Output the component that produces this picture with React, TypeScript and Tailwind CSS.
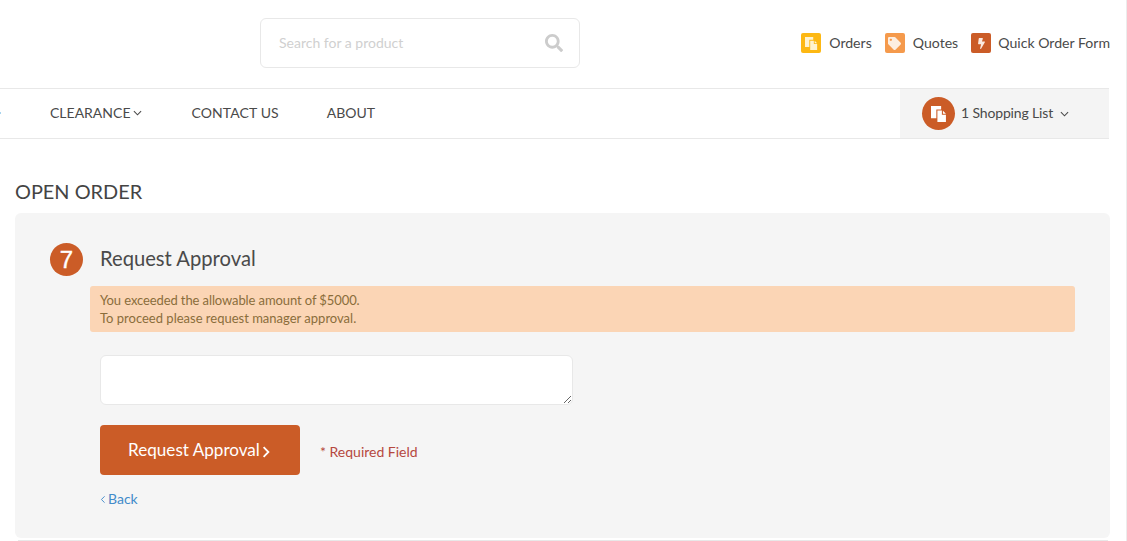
import { FaBolt, FaSearch, FaTag } from "react-icons/fa"

function FilesIcon({ className }: { className?: string }) {
  return (
    <svg viewBox="0 0 15 15" className={className} fill="currentColor">
      <path d="M0 0h9.5v3.2H5V11.5H0z" />
      <path d="M6 4.2h4.2v4H14V15H6zM11.2 4.4 14 7.2H11.2z" />
    </svg>
  )
}

function Chevron({ className, width = "1.2" }: { className?: string; width?: string }) {
  return (
    <svg viewBox="0 0 10 6" className={className} fill="none" stroke="currentColor" strokeWidth={width}>
      <path d="M1 1l4 4 4-4" />
    </svg>
  )
}

const links = [
  { label: "Orders", bg: "bg-[#fdb813]", gap: "gap-[8px]", icon: <FilesIcon className="w-[13px] h-[13px] text-[#fff3d0]" /> },
  { label: "Quotes", bg: "bg-[#f59a4c]", gap: "gap-[8px]", icon: <FaTag className="w-[13px] h-[13px] text-[#fdeee0]" /> },
  { label: "Quick Order Form", bg: "bg-[#cb5c27]", gap: "gap-[7px]", icon: <FaBolt className="w-[9px] h-[11px] text-[#fbeadf]" /> },
]

export default function App() {
  return (
    <div className="w-[1127px] h-[541px] overflow-hidden bg-white border-r border-[#ececec] font-['Lato',sans-serif] text-[#4a4a4a]">
      <div className="w-[1110px]">
        {/* Header */}
        <header className="h-[88px] flex items-center pl-[260px]">
          <div className="w-[320px] h-[50px] mt-[-2px] rounded-[6px] border border-[#e8e8e8] flex items-center justify-between pl-[18px] pr-[16px]">
            <span className="text-[14px] text-[#d0d0d0] mb-[2px]">Search for a product</span>
            <FaSearch className="w-[18px] h-[18px] text-[#cccccc]" />
          </div>
          <nav className="ml-auto flex items-center gap-[13px] mt-[-2px]">
            {links.map((link) => (
              <a key={link.label} className={`flex items-center text-[14.1px] leading-[20px] ${link.gap}`}>
                <span className={`w-[20px] h-[20px] rounded-[2px] flex items-center justify-center ${link.bg}`}>
                  {link.icon}
                </span>
                <span>{link.label}</span>
              </a>
            ))}
          </nav>
        </header>

        {/* Nav */}
        <div className="h-[51px] border-y border-[#e8e8e8] flex items-stretch w-[1109px] text-[14px]">
          <div className="flex items-center flex-1 pb-[2px]">
            <span className="w-px h-[2px] mr-[49px] bg-[#a8d4ee]" />
            <span className="flex items-center gap-[3px] mr-[49px]">
              CLEARANCE
              <Chevron className="w-[9px] h-[6px] mt-[1px]" />
            </span>
            <span className="mr-[48px] tracking-[0.1px]">CONTACT US</span>
            <span>ABOUT</span>
          </div>
          <div className="w-[209px] bg-[#f4f4f4] flex items-center pl-[22px]">
            <span className="w-[33px] h-[33px] rounded-full bg-[#cb5c27] text-white flex items-center justify-center">
              <FilesIcon className="w-[16px] h-[16px]" />
            </span>
            <span className="ml-[6px] mb-[2px] tracking-[-0.15px]">1 Shopping List</span>
            <Chevron className="w-[9px] h-[6px] ml-[7px]" />
          </div>
        </div>

        {/* Content */}
        <main className="pl-[15px]">
          <h1 className="text-[19.9px] leading-[24px] pt-[40px] pb-[10px] text-[#444444]">OPEN ORDER</h1>
          <section className="w-[1095px] h-[325px] bg-[#f5f5f5] rounded-[6px] pt-[30px] pl-[35px]">
            <div className="h-[33px] flex items-center gap-[17px]">
              <span className="w-[33px] h-[33px] rounded-full bg-[#cb5c27] text-white flex items-center justify-center text-[24px] font-['Liberation_Sans',sans-serif] [-webkit-text-stroke:0.4px_white]">
                7
              </span>
              <h2 className="text-[20.2px] leading-[27px] mb-[2px]">Request Approval</h2>
            </div>
            <div className="w-[985px] h-[46px] mt-[10px] ml-[40px] rounded-[3px] bg-[#fbd5b5] px-[10px] py-[5px] text-[13px] leading-[18px] text-[#8a6d3b]">
              <span className="block tracking-[-0.1px]">You exceeded the allowable amount of $5000.</span>
              <span className="block">To proceed please request manager approval.</span>
            </div>
            <div className="ml-[50px]">
              <textarea className="block mt-[23px] w-[473px] h-[50px] rounded-[6px] border border-[#e8e8e8] bg-white" />
              <div className="flex items-center mt-[20px]">
                <button className="w-[200px] h-[50px] rounded-[4px] bg-[#cb5c27] text-white text-[17.1px] flex items-center justify-center">
                  Request Approval
                  <Chevron className="w-[12px] h-[8px] rotate-[-90deg] mt-[3px]" width="1.5" />
                </button>
                <span className="ml-[20px] text-[14px] mt-[3px] text-[#b5483f]">* Required Field</span>
              </div>
              <a className="mt-[15px] flex items-center gap-[1px] text-[14px] leading-[18px] text-[#428bca]">
                <Chevron className="w-[8px] h-[5px] rotate-[90deg] mt-[1px] ml-[-1px]" />
                Back
              </a>
            </div>
          </section>
          <div className="h-px w-[1090px] ml-[3px] mt-[2px] bg-[#e8e8e8]" />
        </main>
      </div>
    </div>
  )
}
